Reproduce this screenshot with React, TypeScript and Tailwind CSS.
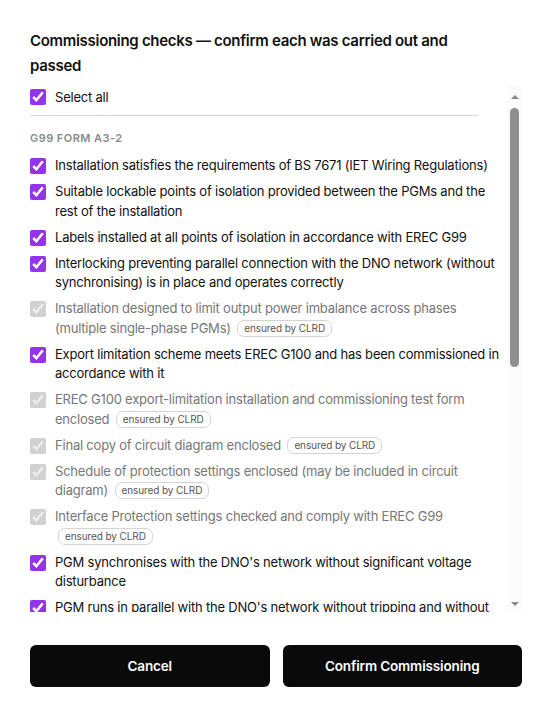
import React from "react";

type Item = { text: string; clrd?: boolean };

const items: Item[] = [
  { text: "Installation satisfies the requirements of BS 7671 (IET Wiring Regulations)" },
  { text: "Suitable lockable points of isolation provided between the PGMs and the rest of the installation" },
  { text: "Labels installed at all points of isolation in accordance with EREC G99" },
  { text: "Interlocking preventing parallel connection with the DNO network (without synchronising) is in place and operates correctly" },
  { text: "Installation designed to limit output power imbalance across phases (multiple single-phase PGMs)", clrd: true },
  { text: "Export limitation scheme meets EREC G100 and has been commissioned in accordance with it" },
  { text: "EREC G100 export-limitation installation and commissioning test form enclosed", clrd: true },
  { text: "Final copy of circuit diagram enclosed", clrd: true },
  { text: "Schedule of protection settings enclosed (may be included in circuit diagram)", clrd: true },
  { text: "Interface Protection settings checked and comply with EREC G99", clrd: true },
  { text: "PGM synchronises with the DNO's network without significant voltage disturbance" },
  { text: "PGM runs in parallel with the DNO's network without tripping and without causing significant voltage disturbance" },
  { text: "PGM disconnects from the DNO's network without significant voltage disturbance" },
  { text: "Loss of mains protection operates correctly when the supply is removed" },
];

function Row({ item }: { item: Item }) {
  const disabled = !!item.clrd;
  return (
    <label className="flex items-start gap-[9px]">
      <input
        type="checkbox"
        checked
        readOnly
        disabled={disabled}
        className="mt-[2px] h-4 w-4 shrink-0 accent-[#9333ea]"
      />
      <span
        className={`text-[13px] leading-[19.5px] tracking-[-0.016em] ${disabled ? "text-[#777777]" : "text-[#111111]"}`}
      >
        {item.text}
        {disabled && (
          <>
            {" "}
            <span className="ml-[3px] inline-block rounded-[7px] border border-[#d4d4d4] px-[6px] text-[10px] leading-[15px] tracking-[-0.01em] text-[#555555] align-[1px]">
              ensured by CLRD
            </span>
          </>
        )}
      </span>
    </label>
  );
}

function Scrollbar() {
  return (
    <div className="w-[15px] shrink-0 flex flex-col items-center bg-[#fbfbfb]">
      <div className="h-[22px] flex items-center justify-center">
        <div className="h-0 w-0 border-x-[4px] border-x-transparent border-b-[4px] border-b-[#8a8a8a]" />
      </div>
      <div className="h-[259px] w-[9px] rounded-full bg-[#8f8f8f]" />
      <div className="flex-1" />
      <div className="h-[16px] flex items-center justify-center">
        <div className="h-0 w-0 border-x-[4px] border-x-transparent border-t-[4px] border-t-[#8a8a8a]" />
      </div>
    </div>
  );
}

export default function App() {
  return (
    <div
      className="w-[552px] h-[719px] bg-white flex flex-col px-[30px] pt-[28px]"
      style={{ fontFamily: "Inter, 'Noto Sans', sans-serif" }}
    >
      <h2 className="text-[15px] font-semibold leading-[25px] tracking-[-0.02em] text-[#111111] pr-6">
        Commissioning checks — confirm each was carried out and passed
      </h2>
      <div className="mt-[8px] h-[526px] shrink-0 flex">
        <div className="flex-1 min-w-0 overflow-hidden">
          <div className="flex items-center gap-[9px] pt-[1px] pb-[8px] border-b border-[#d6d6d6] mr-[29px]">
            <input type="checkbox" checked readOnly className="h-4 w-4 shrink-0 accent-[#9333ea]" />
            <span className="text-[13px] leading-5 tracking-[-0.016em] text-[#111111]">Select all</span>
          </div>
          <div className="pt-[14px] text-[11px] font-semibold leading-4 tracking-[0.04em] text-[#8a8a8a] uppercase">
            G99 Form A3-2
          </div>
          <div className="mt-[10px] flex flex-col gap-[6.5px]">
            {items.map((it, i) => (
              <Row key={i} item={it} />
            ))}
          </div>
        </div>
        <Scrollbar />
      </div>
      <div className="mt-[33px] grid grid-cols-2 gap-[13px]">
        <button className="h-[42px] rounded-md bg-[#0a0a0a] text-white text-[13.5px] font-semibold tracking-[-0.01em]">
          Cancel
        </button>
        <button className="h-[42px] rounded-md bg-[#0a0a0a] text-white text-[13.5px] font-semibold tracking-[-0.01em]">
          Confirm Commissioning
        </button>
      </div>
    </div>
  );
}
